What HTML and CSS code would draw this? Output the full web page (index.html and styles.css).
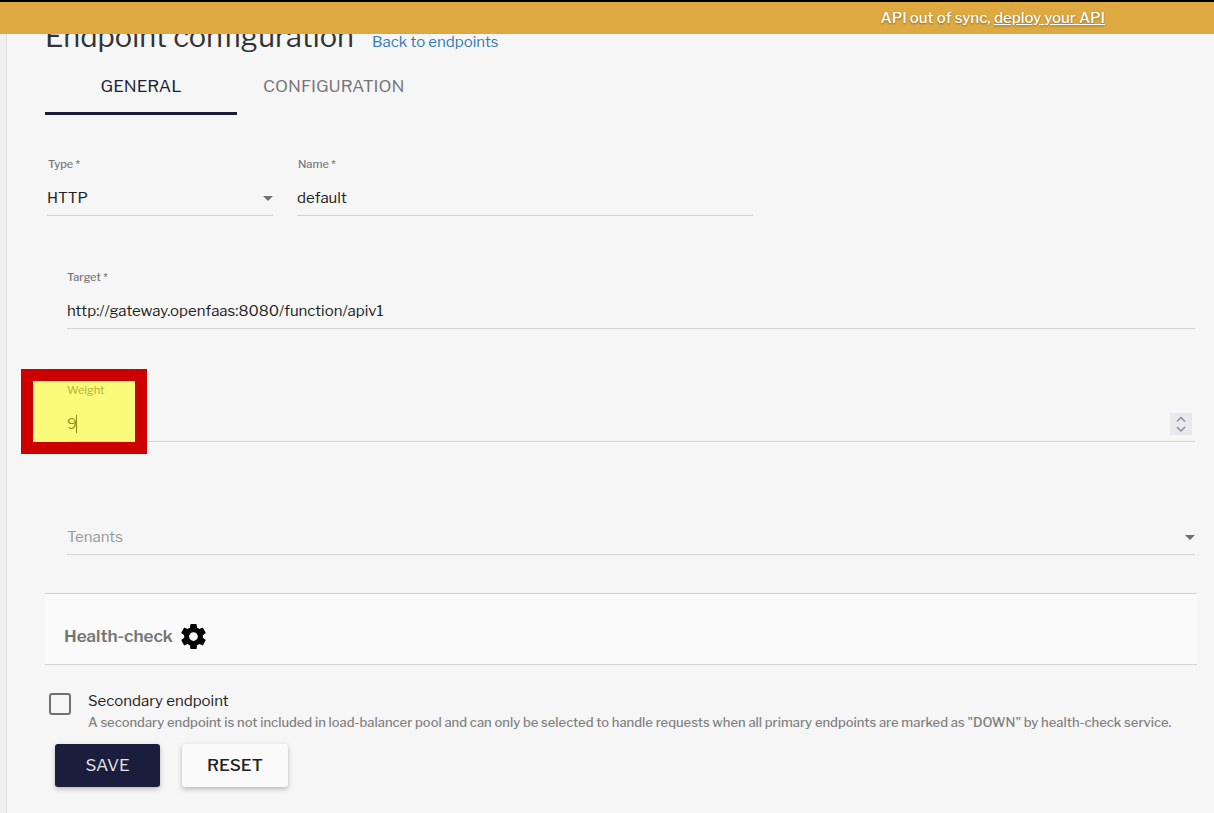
FILE: index.html
```html
<!DOCTYPE html>
<html lang="en">
<head>
<meta charset="utf-8">
<meta name="viewport" content="width=device-width, initial-scale=1">
<title>Endpoint configuration</title>
<link rel="stylesheet" href="styles.css">
</head>
<body>
<div class="banner"><p class="banner-text">API out of sync, <a href="#deploy">deploy your API</a></p></div>
<main class="page">
  <header class="heading">
    <h1>Endpoint configuration</h1>
    <a class="back" href="#endpoints">Back to endpoints</a>
  </header>
  <nav class="tabs">
    <button class="tab tab-active" type="button">GENERAL</button>
    <button class="tab" type="button">CONFIGURATION</button>
  </nav>
  <form class="form">
    <div class="row">
      <div class="field field-type">
        <label for="type">Type *</label>
        <div class="select-box">
          <select id="type"><option>HTTP</option></select>
          <svg class="arrow" viewBox="0 0 10 5" aria-hidden="true"><path d="M0 0h10L5 5z"/></svg>
        </div>
      </div>
      <div class="field field-name">
        <label for="name">Name *</label>
        <input id="name" type="text" value="default">
      </div>
    </div>
    <div class="stack">
      <div class="field field-target">
        <label for="target">Target *</label>
        <input id="target" type="text" value="http://gateway.openfaas:8080/function/apiv1">
      </div>
      <div class="field field-weight">
        <label for="weight">Weight</label>
        <div class="number-box">
          <input id="weight" type="number" value="9">
          <span class="caret"></span>
          <svg class="spinner" viewBox="0 0 22 22" aria-hidden="true"><path d="M7 8.500l4-4 4 4M7 14l4 4 4-4"/></svg>
        </div>
        <span class="marker"></span>
      </div>
      <div class="field">
        <div class="select-box">
          <select id="tenants" class="placeholder" aria-label="Tenants"><option>Tenants</option></select>
          <svg class="arrow" viewBox="0 0 10 5" aria-hidden="true"><path d="M0 0h10L5 5z"/></svg>
        </div>
      </div>
    </div>
    <section class="panel">
      <h2>Health-check</h2>
      <svg class="gear" viewBox="2 2 20 20" aria-hidden="true"><path d="M19.430 12.980c.04-.32.07-.64.07-.98s-.03-.66-.07-.98l2.110-1.650c.19-.15.24-.42.12-.64l-2-3.460c-.12-.22-.39-.3-.61-.22l-2.490 1c-.52-.4-1.080-.73-1.690-.98l-.38-2.650C14.460 2.180 14.250 2 14 2h-4c-.25 0-.46.18-.49.42l-.38 2.650c-.61.25-1.170.59-1.690.98l-2.490-1c-.23-.09-.49 0-.61.22l-2 3.460c-.13.22-.07.49.12.64l2.110 1.650c-.04.32-.07.65-.07.98s.03.66.07.98l-2.110 1.650c-.19.15-.24.42-.12.64l2 3.460c.12.22.39.3.61.22l2.490-1c.52.4 1.080.73 1.690.98l.38 2.650c.03.24.24.42.49.42h4c.25 0 .46-.18.49-.42l.38-2.650c.61-.25 1.170-.59 1.690-.98l2.490 1c.23.09.49 0 .61-.22l2-3.460c.12-.22.07-.49-.12-.64l-2.110-1.650zM12 15.500c-1.930 0-3.500-1.570-3.500-3.500s1.570-3.500 3.500-3.500 3.500 1.570 3.500 3.500-1.570 3.500-3.500 3.500z"/></svg>
    </section>
    <div class="check">
      <input id="secondary" type="checkbox" aria-describedby="secondary-hint">
      <div class="check-text">
        <label for="secondary">Secondary endpoint</label>
        <p id="secondary-hint">A secondary endpoint is not included in load-balancer pool and can only be selected to handle requests when all primary endpoints are marked as "DOWN" by health-check service.</p>
      </div>
    </div>
    <div class="actions">
      <button class="button button-save" type="button">SAVE</button>
      <button class="button button-reset" type="button">RESET</button>
    </div>
  </form>
</main>
</body>
</html>
```
FILE: styles.css
```css
* { box-sizing: border-box; }
body {
  margin: 0;
  background: #efefef;
  color: #212121;
  font-family: "Libre Franklin", Inter, sans-serif;
  font-size: 15px;
}
h1, h2, p { margin: 0; font-weight: 400; }
input, select, button { font: inherit; color: inherit; }

.banner {
  position: fixed;
  top: 0;
  left: 0;
  right: 0;
  z-index: 2;
  height: 34px;
  padding-right: 109px;
  border-top: 2px solid #000;
  background: #dea940;
}
.banner-text {
  color: #fff;
  font-weight: 500;
  line-height: 32px;
  text-align: right;
  text-shadow: 0 1px 2px rgba(0, 0, 0, .4);
}
.banner a { color: inherit; }

.page {
  min-height: 100vh;
  margin-left: 6px;
  padding: 17px 17px 24px 38px;
  border-left: 1px solid #dedede;
  background: #f6f6f6;
}
.heading { display: flex; align-items: baseline; gap: 18px; }
h1 { color: #333; font-size: 29px; line-height: 40px; }
.back { color: #337ab7; text-decoration: none; }

.tabs { display: flex; margin-top: 3px; }
.tab {
  height: 55px;
  padding: 0 26px;
  border: 0;
  border-bottom: 3px solid transparent;
  background: none;
  color: #757575;
  font-size: 17px;
}
.tab-active { width: 192px; border-color: #1b1d3c; color: #1b1d3c; }

.row { display: flex; gap: 24px; margin: 41px 0 0 2px; }
.field { display: flex; flex-direction: column; gap: 10px; }
.field label {
  padding-left: 1px;
  color: #757575;
  font-size: 11px;
  font-weight: 500;
  line-height: 16px;
}
.field input, .field select {
  width: 100%;
  height: 34px;
  padding: 0 0 2px;
  border: 0;
  border-bottom: 1px solid #d3d3d3;
  border-radius: 0;
  outline: 0;
  background: transparent;
  appearance: none;
}
.field-type { flex: 0 0 20%; max-width: 226px; }
.field-name { flex: 0 1 456px; }
.select-box, .number-box { position: relative; }
.arrow {
  position: absolute;
  top: 14px;
  right: 0;
  width: 10px;
  height: 5px;
  fill: #707070;
  pointer-events: none;
}
.field .placeholder { color: #999; }

.stack { display: flex; flex-direction: column; padding: 53px 2px 0 22px; }
.stack label { padding-left: 0; }
.field-weight { position: relative; margin: 53px 0 79px; }
.field input[type="number"] { appearance: textfield; }
.caret {
  position: absolute;
  top: 7px;
  left: 9px;
  width: 1px;
  height: 18px;
  background: #212121;
}
.spinner {
  position: absolute;
  top: 5px;
  right: 3px;
  width: 22px;
  height: 22px;
  background: #e9e9ed;
  fill: none;
  stroke: #8b8a99;
  stroke-width: 1.5;
}
.marker {
  position: absolute;
  top: -13px;
  left: -46px;
  width: 126px;
  height: 85px;
  border: 12px solid #c00;
  background: rgba(255, 255, 0, .5);
  pointer-events: none;
}

.panel {
  display: flex;
  align-items: center;
  gap: 8px;
  height: 72px;
  margin-top: 38px;
  padding: 14px 19px 0;
  border: solid #d3d3d3;
  border-width: 1px 0;
  background: #fafafa;
}
h2 { color: #757575; font-size: 17px; font-weight: 600; }
.gear { width: 25px; height: 25px; }

.check { display: flex; gap: 17px; margin: 25px 0 0 4px; }
.check input {
  flex: none;
  width: 22px;
  height: 22px;
  margin: 3px 0 0;
  border: 2px solid #707070;
  border-radius: 3px;
  appearance: none;
}
.check-text label { display: block; line-height: 22px; }
.check-text p { color: #808080; font-size: 13px; font-weight: 500; line-height: 20px; }

.actions { display: flex; gap: 22px; margin: 12px 0 0 10px; }
.button {
  min-width: 105px;
  height: 43px;
  padding: 0 25px 2px;
  border: 0;
  border-radius: 3px;
  box-shadow: 0 2px 5px rgba(0, 0, 0, .26);
  font-size: 17px;
}
.button-save { background: #1b1d3c; color: #e4e4e7; }
.button-reset { background: #fafafa; font-weight: 500; }
```
